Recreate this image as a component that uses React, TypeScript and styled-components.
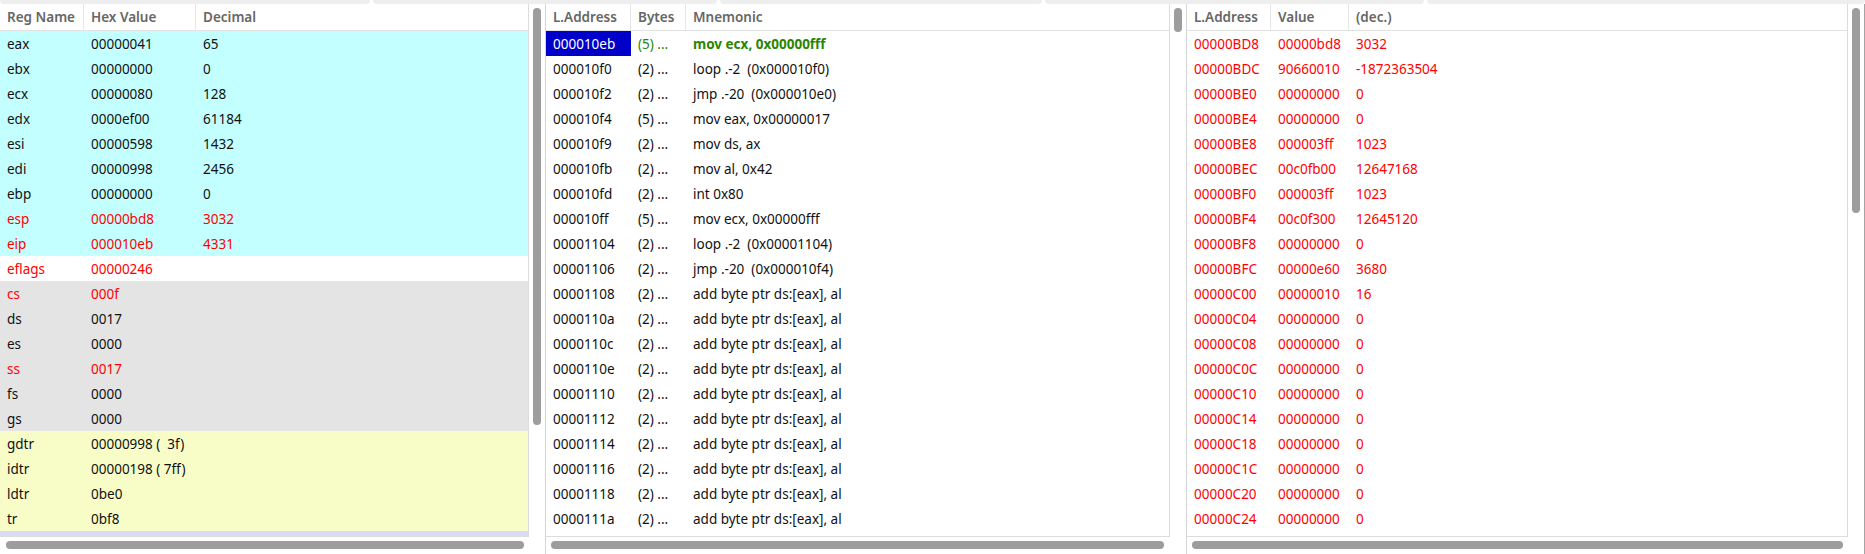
import React from "react";
import styled, { createGlobalStyle } from "styled-components";

const GlobalStyle = createGlobalStyle`
  html, body {
    margin: 0;
    padding: 0;
    background: #ffffff;
  }
  body {
    font-family: "Noto Sans", "Liberation Sans", sans-serif;
    font-size: 13.5px;
    color: #111111;
  }
  * {
    box-sizing: border-box;
  }
`;

type Tone = "cyan" | "white" | "gray" | "yellow" | "lavender";

const tones: Record<Tone, string> = {
  cyan: "#c4ffff",
  white: "#ffffff",
  gray: "#e4e4e4",
  yellow: "#f8fdc8",
  lavender: "#dadaf6",
};

type Ink = "plain" | "red" | "green" | "selected";

const inks: Record<Ink, string> = {
  plain: "#111111",
  red: "#ff0000",
  green: "#2a8500",
  selected: "#ffffff",
};

const registers: [string, string, string, Tone, boolean][] = [
  ["eax", "00000041", "65", "cyan", false],
  ["ebx", "00000000", "0", "cyan", false],
  ["ecx", "00000080", "128", "cyan", false],
  ["edx", "0000ef00", "61184", "cyan", false],
  ["esi", "00000598", "1432", "cyan", false],
  ["edi", "00000998", "2456", "cyan", false],
  ["ebp", "00000000", "0", "cyan", false],
  ["esp", "00000bd8", "3032", "cyan", true],
  ["eip", "000010eb", "4331", "cyan", true],
  ["eflags", "00000246", "", "white", true],
  ["cs", "000f", "", "gray", true],
  ["ds", "0017", "", "gray", false],
  ["es", "0000", "", "gray", false],
  ["ss", "0017", "", "gray", true],
  ["fs", "0000", "", "gray", false],
  ["gs", "0000", "", "gray", false],
  ["gdtr", "00000998 (  3f)", "", "yellow", false],
  ["idtr", "00000198 ( 7ff)", "", "yellow", false],
  ["ldtr", "0be0", "", "yellow", false],
  ["tr", "0bf8", "", "yellow", false],
  ["", "", "", "lavender", false],
];

const filler = "add byte ptr ds:[eax], al";

const code: [string, string, string][] = [
  ["000010eb", "(5) ...", "mov ecx, 0x00000fff"],
  ["000010f0", "(2) ...", "loop .-2  (0x000010f0)"],
  ["000010f2", "(2) ...", "jmp .-20  (0x000010e0)"],
  ["000010f4", "(5) ...", "mov eax, 0x00000017"],
  ["000010f9", "(2) ...", "mov ds, ax"],
  ["000010fb", "(2) ...", "mov al, 0x42"],
  ["000010fd", "(2) ...", "int 0x80"],
  ["000010ff", "(5) ...", "mov ecx, 0x00000fff"],
  ["00001104", "(2) ...", "loop .-2  (0x00001104)"],
  ["00001106", "(2) ...", "jmp .-20  (0x000010f4)"],
  ["00001108", "(2) ...", filler],
  ["0000110a", "(2) ...", filler],
  ["0000110c", "(2) ...", filler],
  ["0000110e", "(2) ...", filler],
  ["00001110", "(2) ...", filler],
  ["00001112", "(2) ...", filler],
  ["00001114", "(2) ...", filler],
  ["00001116", "(2) ...", filler],
  ["00001118", "(2) ...", filler],
  ["0000111a", "(2) ...", filler],
];

const stack: [string, string, string][] = [
  ["00000BD8", "00000bd8", "3032"],
  ["00000BDC", "90660010", "-1872363504"],
  ["00000BE0", "00000000", "0"],
  ["00000BE4", "00000000", "0"],
  ["00000BE8", "000003ff", "1023"],
  ["00000BEC", "00c0fb00", "12647168"],
  ["00000BF0", "000003ff", "1023"],
  ["00000BF4", "00c0f300", "12645120"],
  ["00000BF8", "00000000", "0"],
  ["00000BFC", "00000e60", "3680"],
  ["00000C00", "00000010", "16"],
  ["00000C04", "00000000", "0"],
  ["00000C08", "00000000", "0"],
  ["00000C0C", "00000000", "0"],
  ["00000C10", "00000000", "0"],
  ["00000C14", "00000000", "0"],
  ["00000C18", "00000000", "0"],
  ["00000C1C", "00000000", "0"],
  ["00000C20", "00000000", "0"],
  ["00000C24", "00000000", "0"],
];

const Window = styled.div`
  width: 1865px;
  height: 554px;
  display: flex;
  flex-direction: column;
  overflow: hidden;
  background: #ffffff;
`;

const TabEdge = styled.div`
  display: flex;
  gap: 3px;
  height: 4px;
  flex-shrink: 0;
`;

const TabTail = styled.div<{ $w?: number }>`
  flex: ${(p) => (p.$w ? `0 0 ${p.$w}px` : "1")};
  background: #eeeeee;
  border-radius: 0 0 4px 4px;
`;

const Panes = styled.div`
  display: flex;
  flex: 1;
  min-height: 0;
`;

const Pane = styled.div<{ $w: number; $divided?: boolean; $edge?: boolean }>`
  width: ${(p) => p.$w}px;
  flex-shrink: 0;
  display: grid;
  grid-template-columns: 1fr 16px;
  grid-template-rows: 1fr 17px;
  border-left: ${(p) => (p.$divided ? "1px solid #d6d6d6" : "none")};
  border-right: ${(p) => (p.$edge ? "1px solid #a4a4a4" : "none")};
`;

const Table = styled.div`
  display: flex;
  flex-direction: column;
  min-height: 0;
  overflow: hidden;
  border-right: 1px solid #dcdcdc;
  border-bottom: 1px solid #dcdcdc;
`;

const Header = styled.div<{ $cols: string }>`
  display: grid;
  grid-template-columns: ${(p) => p.$cols};
  height: 27px;
  flex-shrink: 0;
  border-bottom: 1px solid #e2e2e2;
  background: #ffffff;
`;

const HeadCell = styled.div`
  display: flex;
  align-items: center;
  padding-left: 7px;
  font-weight: 600;
  color: #666666;
  border-right: 1px solid #e6e6e6;
  white-space: nowrap;

  &:last-child {
    border-right: none;
  }
`;

const Body = styled.div`
  flex: 1;
  min-height: 0;
  overflow: hidden;
`;

const Row = styled.div<{ $cols: string; $tone?: Tone }>`
  display: grid;
  grid-template-columns: ${(p) => p.$cols};
  height: 25px;
  background: ${(p) => tones[p.$tone ?? "white"]};
`;

const Cell = styled.div<{ $ink?: Ink; $bold?: boolean }>`
  display: flex;
  align-items: center;
  padding-left: 7px;
  white-space: pre;
  overflow: hidden;
  color: ${(p) => inks[p.$ink ?? "plain"]};
  font-weight: ${(p) => (p.$bold ? 700 : 400)};
  background: ${(p) => (p.$ink === "selected" ? "#0000c8" : "transparent")};
`;

const VTrack = styled.div`
  display: flex;
  justify-content: center;
  padding-top: 4px;
`;

const VThumb = styled.div<{ $len: number }>`
  width: 8px;
  height: ${(p) => p.$len}px;
  background: #9d9d9d;
  border-radius: 4px;
`;

const HTrack = styled.div`
  display: flex;
  align-items: flex-start;
  padding-top: 4px;
`;

const HThumb = styled.div<{ $from: number; $len: number }>`
  margin-left: ${(p) => p.$from}px;
  width: ${(p) => p.$len}px;
  height: 8px;
  background: #9d9d9d;
  border-radius: 4px;
`;

const regCols = "84px 112px 1fr";
const codeCols = "85px 55px 1fr";
const stackCols = "84px 78px 1fr";

function App() {
  return (
    <Window>
      <GlobalStyle />
      <TabEdge>
        <TabTail $w={370} />
        <TabTail $w={344} />
        <TabTail $w={322} />
        <TabTail $w={379} />
        <TabTail />
      </TabEdge>

      <Panes>
        <Pane $w={545}>
          <Table>
            <Header $cols={regCols}>
              <HeadCell>Reg Name</HeadCell>
              <HeadCell>Hex Value</HeadCell>
              <HeadCell>Decimal</HeadCell>
            </Header>
            <Body>
              {registers.map(([name, hex, dec, tone, red], i) => (
                <Row key={i} $cols={regCols} $tone={tone}>
                  <Cell $ink={red ? "red" : "plain"}>{name}</Cell>
                  <Cell $ink={red ? "red" : "plain"}>{hex}</Cell>
                  <Cell $ink={red ? "red" : "plain"}>{dec}</Cell>
                </Row>
              ))}
            </Body>
          </Table>
          <VTrack>
            <VThumb $len={417} />
          </VTrack>
          <HTrack>
            <HThumb $from={6} $len={518} />
          </HTrack>
        </Pane>

        <Pane $w={641} $divided>
          <Table>
            <Header $cols={codeCols}>
              <HeadCell>L.Address</HeadCell>
              <HeadCell>Bytes</HeadCell>
              <HeadCell>Mnemonic</HeadCell>
            </Header>
            <Body>
              {code.map(([addr, bytes, mnemonic], i) => (
                <Row key={addr} $cols={codeCols}>
                  <Cell $ink={i === 0 ? "selected" : "plain"}>{addr}</Cell>
                  <Cell $ink={i === 0 ? "green" : "plain"}>{bytes}</Cell>
                  <Cell $ink={i === 0 ? "green" : "plain"} $bold={i === 0}>
                    {mnemonic}
                  </Cell>
                </Row>
              ))}
            </Body>
          </Table>
          <VTrack>
            <VThumb $len={24} />
          </VTrack>
          <HTrack>
            <HThumb $from={5} $len={613} />
          </HTrack>
        </Pane>

        <Pane $w={679} $divided $edge>
          <Table>
            <Header $cols={stackCols}>
              <HeadCell>L.Address</HeadCell>
              <HeadCell>Value</HeadCell>
              <HeadCell>(dec.)</HeadCell>
            </Header>
            <Body>
              {stack.map(([addr, value, dec]) => (
                <Row key={addr} $cols={stackCols}>
                  <Cell $ink="red">{addr}</Cell>
                  <Cell $ink="red">{value}</Cell>
                  <Cell $ink="red">{dec}</Cell>
                </Row>
              ))}
            </Body>
          </Table>
          <VTrack>
            <VThumb $len={205} />
          </VTrack>
          <HTrack>
            <HThumb $from={5} $len={651} />
          </HTrack>
        </Pane>
      </Panes>
    </Window>
  );
}

export default App;
